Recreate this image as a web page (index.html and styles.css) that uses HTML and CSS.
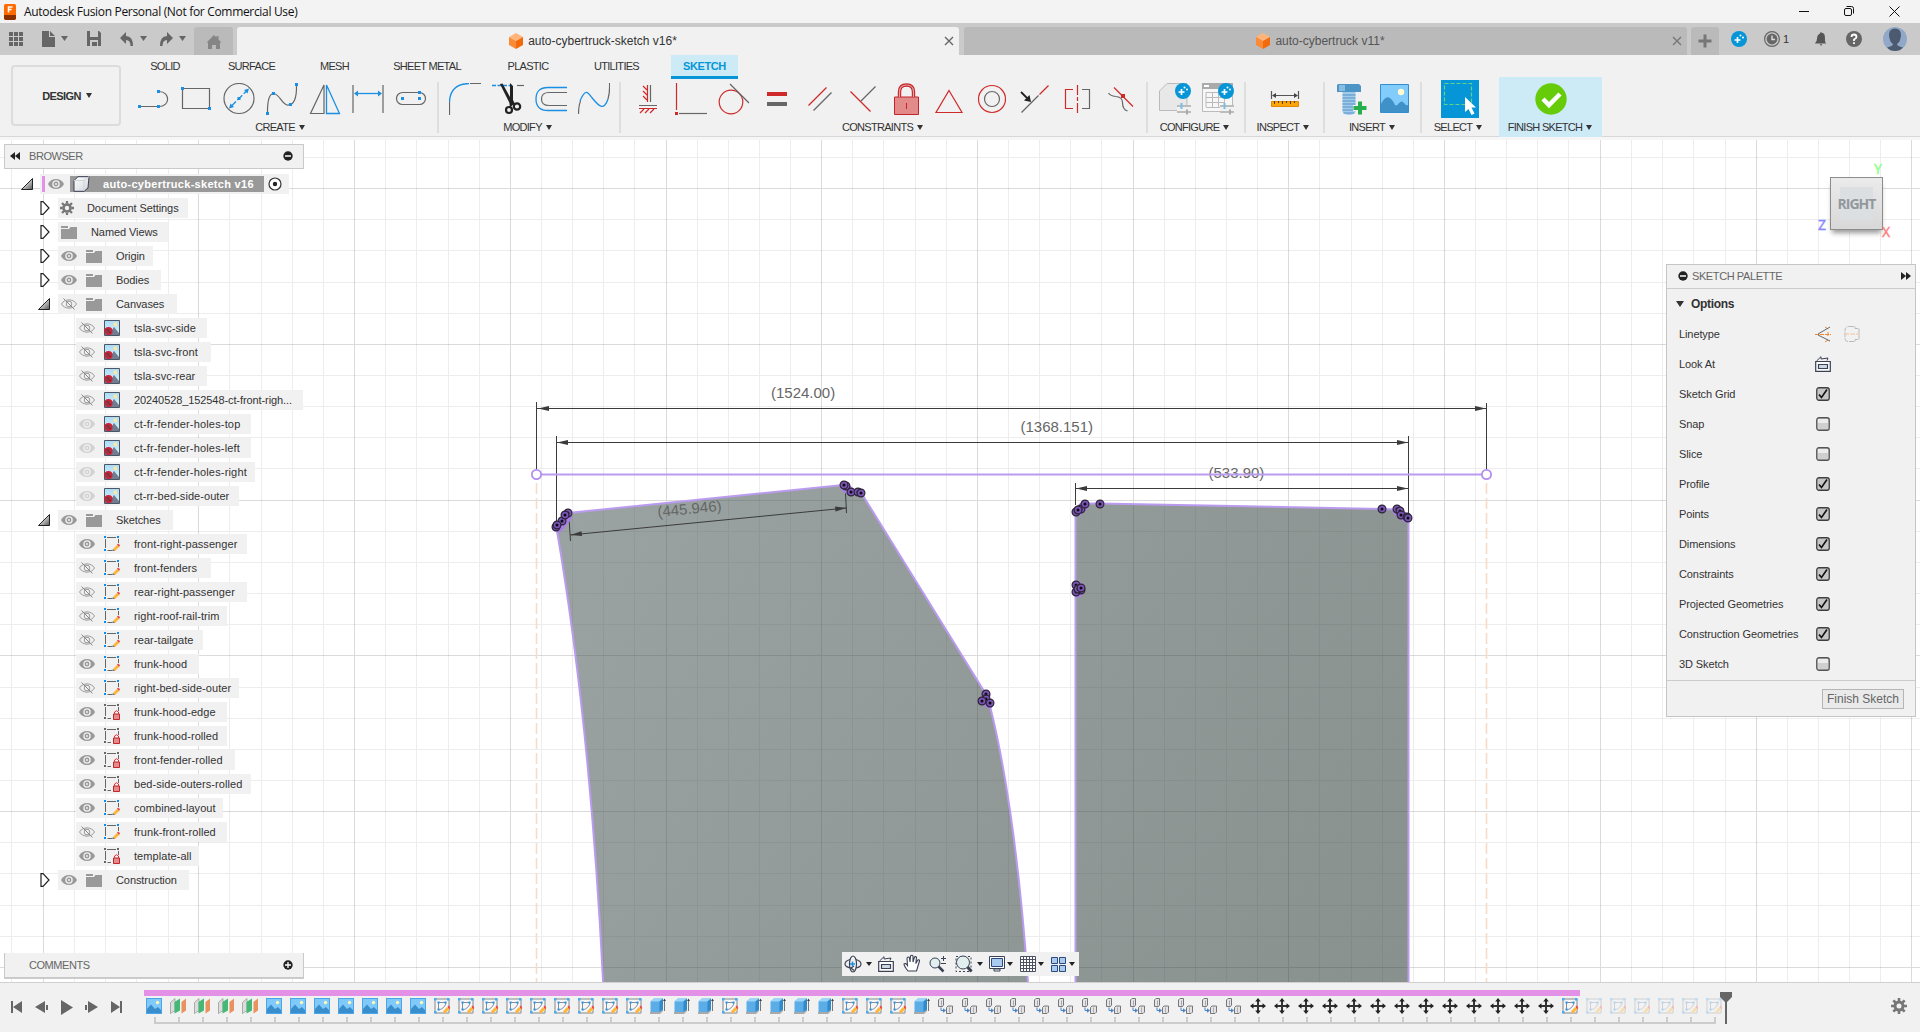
FILE: index.html
```html
<!DOCTYPE html>
<html lang="en">
<head>
<meta charset="utf-8">
<title>Autodesk Fusion Personal (Not for Commercial Use)</title>
<link rel="stylesheet" href="styles.css">
</head>
<body>
<svg class="defs" aria-hidden="true">
  <defs>
    <linearGradient id="g-face" x1="0" y1="0" x2="1" y2="1"><stop offset="0" stop-color="#fff"/><stop offset="1" stop-color="#d3d6dc"/></linearGradient>
    <linearGradient id="g-tri" x1="0" y1="0" x2="1" y2="1"><stop offset=".3" stop-color="#eee"/><stop offset="1" stop-color="#555"/></linearGradient>
    <linearGradient id="g-sky" x1="0" y1="0" x2="0" y2="1"><stop offset="0" stop-color="#a9dcf8"/><stop offset="1" stop-color="#dff0f8"/></linearGradient>
    <g id="node"><circle cx="5" cy="5" r="3.900" fill="#7a55b4" stroke="#2d2438" stroke-width="1.200"/><circle cx="5" cy="5" r="1.500" fill="#0c0814"/></g>
  </defs>
  <symbol id="eye" viewBox="0 0 16 12"><path d="M0 6C3-.8 13-.8 16 6 13 12.800 3 12.800 0 6z" fill="#999"/><circle cx="8" cy="6" r="3.100" fill="none" stroke="#f1f1f1" stroke-width="1.300"/><circle cx="8" cy="6" r="1" fill="#f1f1f1"/></symbol>
  <symbol id="eye-off" viewBox="0 0 16 12"><path d="M.5 6C3.500.5 12.500.5 15.500 6 12.500 11.500 3.500 11.500.5 6z" fill="none" stroke="#999"/><circle cx="8" cy="6" r="2.800" fill="none" stroke="#999"/><path d="M2.500.5l11 11" stroke="#888"/></symbol>
  <symbol id="folder" viewBox="0 0 16 14"><path d="M0 1h7v2H0zM0 4h8l1.500-2H16v12H0z" fill="#999"/></symbol>
  <symbol id="open" viewBox="0 0 12 12"><path d="M11.500.5v11H.5z" fill="url(#g-tri)" stroke="#222"/></symbol>
  <symbol id="shut" viewBox="0 0 10 14"><path d="M1 .7h2l6 6.300-6 6.300H1z" fill="#fff" stroke="#222" stroke-width="1.200"/></symbol>
  <symbol id="canvas-i" viewBox="0 0 16 16"><path d="M.5.5h15v15H.5z" fill="url(#g-sky)" stroke="#4b5566"/><path d="M1 12l4-4 3 2 2-3 5 6v2H1z" fill="#707c90"/><path d="M9.500 2.500h3.500V6H9.500z" fill="#fbe7a3"/><circle cx="4.500" cy="11" r="3.300" fill="#a53343" stroke="#d41f2c" stroke-width="1.400"/><path d="M2.500 9l4 4" stroke="#5d2434"/></symbol>
  <symbol id="sk" viewBox="0 0 16 16"><path d="M3 1.500h9M1.500 3v9M3.500 14.500H8M14.500 3v4" stroke="#666" fill="none"/><path d="M0 0h2v2H0zM13 0h2v2h-2zM0 13h2v2H0z" fill="#0b8ee8"/><path d="M9 13l4-4 2.300 2-4.300 4z" fill="#fdb73a"/><path d="M13 8.500l1.200-1L16 9.300 15 11z" fill="#f04040"/><path d="M8 15l1-2 2 2z" fill="#777"/></symbol>
  <symbol id="sk-lock" viewBox="0 0 16 16"><path d="M3 1.500h9M1.500 3v9M3.500 14.500H7M14.500 3v4" stroke="#666" fill="none"/><path d="M0 0h2v2H0zM13 0h2v2h-2zM0 13h2v2H0z" fill="#666"/><path d="M9.500 10h6v5.500h-6z" fill="#e38a8a" stroke="#c2242a"/><path d="M10.500 10V8q2-2.500 4 0v2" fill="none" stroke="#d33"/></symbol>
  <symbol id="pic" viewBox="0 0 16 16"><path d="M0 0h16v16H0z" fill="#4aa6e8"/><path d="M1 1h14v11H1z" fill="#80c9fb"/><path d="M1 11l4-4.500L9 11l3-2 3 3v3H1z" fill="#3a8ecb"/><circle cx="11.500" cy="4.500" r="1.700" fill="#fff6b8"/></symbol>
  <symbol id="plane" viewBox="0 0 16 16"><path d="M.5 4.500L5 .5v12l-4.500 3z" fill="#ddd" stroke="#aaa"/><path d="M4.500 4L10 .5v12L4.500 15.500z" fill="#45b877"/><path d="M11.500 4L16 .5v12l-4.500 3z" fill="#e8935f"/></symbol>
  <symbol id="tsk" viewBox="0 0 16 16"><path d="M1 1h14v14H1z" fill="#f6f6f6" stroke="#888"/><path d="M0 0h2.500v2.500H0zM13 0h2.500v2.500H13zM0 13h2.500v2.500H0z" fill="#4aaaf0"/><path d="M4 4.500h8q-1 6-7.500 7.500M4.500 5v6" fill="none" stroke="#7d8fa3"/><path d="M3.500 3.500h2v2h-2zM10.500 3.500h2v2h-2zM3.500 10.500h2v2h-2z" fill="#2c91e6"/><path d="M9 13.500L13 9l2.500 2-4.500 4.500z" fill="#fdb73a"/><path d="M13.500 8.500L15 7.500 16.500 10l-1.300 1.200z" fill="#f04040"/></symbol>
  <symbol id="box" viewBox="0 0 16 16"><path d="M0 14h9l4-3v2l-3 3H0z" fill="#aaa"/><path d="M.5 3.500L4 .5h9v11L9.500 14H.5z" fill="#5aade6"/><path d="M.5 3.500L4 .5h9L9.500 3.500z" fill="#9bd4f8"/><path d="M9.500 3.500L13 .5v11L9.500 14z" fill="#318bcb"/><path d="M14.500 2v11" stroke="#777"/><path d="M13 3l1.500-2.500L16 3z" fill="#444"/></symbol>
  <symbol id="comp" viewBox="0 0 16 16"><path d="M.5 2L2 .5h3.500V7L4.500 8.500h-4zM8.500 9.500L10 8h4.500v6l-1.500 1.500H8.500z" fill="#e4e4e6" stroke="#777"/><path d="M3.500 2.500v5M11.500 9.500v5" stroke="#aaa"/><path d="M3 9.500v3h2.500" fill="none" stroke="#4a82cc"/><path d="M5 10.200l3 2.300-3 2.300z" fill="#4a82cc"/></symbol>
  <symbol id="move" viewBox="0 0 16 16"><path d="M8 2v12M2 8h12" stroke="#333" stroke-width="2"/><path d="M5.200 3.500L8 0l2.800 3.500zM5.200 12.500L8 16l2.800-3.500zM3.500 5.200L0 8l3.500 2.800zM12.500 5.200L16 8l-3.500 2.800z" fill="#222"/></symbol>
  <symbol id="gear" viewBox="0 0 16 16"><circle cx="8" cy="8" r="4" fill="none" stroke="#777" stroke-width="3"/><path d="M8 0v3M8 13v3M0 8h3M13 8h3M2.300 2.300l2.200 2.200M11.500 11.500l2.200 2.200M2.300 13.700l2.200-2.200M11.500 4.500l2.200-2.200" stroke="#777" stroke-width="2.600"/></symbol>
  <symbol id="look" viewBox="0 0 16 16"><path d="M.7 5.500h14.600v9.800H.7z" fill="#fff" stroke="#3b4254" stroke-width="1.200"/><path d="M3.500 8.500h9v4h-9z" fill="#cdd8e4" stroke="#3b4254" stroke-width="1.200"/><path d="M1.500 5L6 .7V3l7-1-1 2.500" fill="none" stroke="#3b4254"/></symbol>
  <symbol id="spark" viewBox="0 0 16 16"><circle cx="8" cy="8" r="8" fill="#0696d7"/><path d="M6.500 6v6M3.500 9h6" stroke="#fff" stroke-width="1.700"/><circle cx="9.500" cy="4.500" r="1" fill="#fff"/><circle cx="12" cy="6.500" r="1" fill="#fff"/></symbol>
  <symbol id="cube-o" viewBox="0 0 14 16"><path d="M7 0l7 4-7 4-7-4z" fill="#ffb47a"/><path d="M0 4l7 4v8l-7-4z" fill="#fb8a36"/><path d="M14 4L7 8v8l7-4z" fill="#f26a0a"/></symbol>
  <symbol id="on" viewBox="0 0 14 14"><rect x=".75" y=".75" width="12.500" height="12.500" rx="2.200" fill="#c6c6c6" stroke="#3f3f3f" stroke-width="1.300"/><path d="M3 7.500L5.500 10.500 11 2.500" fill="none" stroke="#111" stroke-width="1.600"/></symbol>
  <symbol id="off" viewBox="0 0 14 14"><rect x=".75" y=".75" width="12.500" height="12.500" rx="2.200" fill="#cfcfcf" stroke="#555" stroke-width="1.300"/><path d="M2 2h10v4H2z" fill="#ececec"/></symbol>
  <symbol id="minus" viewBox="0 0 10 10"><circle cx="5" cy="5" r="4.700" fill="#222"/><path d="M2 5h6" stroke="#fff" stroke-width="1.500"/></symbol>
</svg>

<header class="titlebar">
  <svg class="app-icon" viewBox="0 0 12 16"><rect width="12" height="16" rx="1.500" fill="#ff6b00"/><path d="M0 11h12v3.500L10.500 16h-9L0 14.500z" fill="#8a3000"/><path d="M4.500 8.500V3h4M4.500 5.600h3.200" fill="none" stroke="#fff" stroke-width="1.500"/></svg>
  <span class="app-title">Autodesk Fusion Personal (Not for Commercial Use)</span>
  <svg class="win-buttons" viewBox="0 0 110 20"><path d="M8 9.500h10M98.500 4.500l10 10M108.500 4.500l-10 10" stroke="#111" fill="none"/><rect x="53.500" y="6.500" width="7" height="7" rx="1.500" fill="none" stroke="#111"/><path d="M55.500 4.500h5q2 0 2 2v5" fill="none" stroke="#111"/></svg>
</header>

<nav class="tabbar">
  <div class="quick">
    <svg viewBox="0 0 194 32"><g fill="#666"><path d="M9 9h4v4H9zM14 9h4v4h-4zM19 9h4v4h-4zM9 14h4v4H9zM14 14h4v4h-4zM19 14h4v4h-4zM9 19h4v4H9zM14 19h4v4h-4zM19 19h4v4h-4zM42 8h7v6h6v10H42zM50 8l5 5h-5zM61 13h7l-3.500 5zM140 13h7l-3.500 5zM179 13h7l-3.500 5z"/><path d="M87 8h12l2 2v13H87zM90 8v6h8V8zM90 17v6h2v-4h5v4h1v-6z" fill-rule="evenodd"/><path d="M120 15l6-6v4q7 0 7 10h-2.500q0-6-4.500-6v4zM173 15l-6-6v4q-7 0-7 10h2.500q0-6 4.500-6v4z"/></g></svg>
  </div>
  <div class="tab home"><svg viewBox="0 0 16 16"><path d="M8 1L.5 8.500H2V15h4v-4h4v4h4V8.500h1.500L12.500 5.500V2h-2v1.500z" fill="#858585"/></svg></div>
  <div class="tab doc active"><svg class="doc-icon"><use href="#cube-o"/></svg><span>auto-cybertruck-sketch v16*</span><svg class="tab-x" viewBox="0 0 10 10"><path d="M1 1l8 8M9 1L1 9" stroke="#666" stroke-width="1.400"/></svg></div>
  <div class="tab doc idle"><svg class="doc-icon"><use href="#cube-o"/></svg><span>auto-cybertruck v11*</span><svg class="tab-x" viewBox="0 0 10 10"><path d="M1 1l8 8M9 1L1 9" stroke="#777" stroke-width="1.400"/></svg></div>
  <div class="tab plus"><svg viewBox="0 0 14 14"><path d="M7 .5v13M.5 7h13" stroke="#777" stroke-width="3"/></svg></div>
  <div class="account">
    <svg class="spark"><use href="#spark"/></svg>
    <svg class="clock" viewBox="0 0 16 16"><circle cx="8" cy="8" r="7.400" fill="none" stroke="#666" stroke-width="1.200"/><circle cx="8" cy="8" r="5.400" fill="#666"/><path d="M8 4.500V8.500h3" stroke="#ddd" fill="none" stroke-width="1.400"/></svg><span class="jobs">1</span>
    <svg class="bell" viewBox="0 0 16 16"><path d="M1 13q2.500-2 2.500-6T8 1.500t4.500 5.500 2.500 6zM6.500 14h3l-1.500 2z" fill="#555"/><circle cx="8" cy="1.500" r="1.200" fill="#555"/></svg>
    <svg class="help" viewBox="0 0 16 16"><circle cx="8" cy="8" r="8" fill="#666"/><path d="M5.500 6q0-2.500 2.500-2.500T10.500 6Q10.500 7.300 8 8.500V10M8 11.300v1.700" stroke="#fff" stroke-width="1.800" fill="none"/></svg>
    <svg class="avatar" viewBox="0 0 24 24"><circle cx="12" cy="12" r="12" fill="#92a8c8"/><path d="M12 1.500q6 0 6 6.500-.5 7-4 9 0 2 6 3.500-3 3.500-8 3.500t-8-3.500Q10 19 10 17 6.500 15 6 8 6 1.500 12 1.500z" fill="#4c5a70"/></svg>
  </div>
</nav>

<section class="ribbon">
  <div class="workspace-pick"><span>DESIGN</span><i class="caret"></i></div>
  <div class="ribbon-main">
    <div class="modes"><span class="m-solid">SOLID</span><span class="m-surface">SURFACE</span><span class="m-mesh">MESH</span><span class="m-sheet">SHEET METAL</span><span class="m-plastic">PLASTIC</span><span class="m-util">UTILITIES</span><span class="m-sketch">SKETCH</span></div>
    <div class="groups">
      <div class="group create"><div class="tools">
        <svg viewBox="0 0 32 32"><path d="M3 23.500h18M22 8.500c11.500 0 11.500 15 0 15" class="gl"/><path class="bd" d="M1 22h3v3H1zM20 7h3v3h-3zM20 22h3v3h-3z"/></svg>
        <svg viewBox="0 0 32 32"><path d="M2.500 5.500h27v20h-27z" class="gl"/><path class="bd" d="M1 4h3v3H1zM28 24h3v3h-3z"/></svg>
        <svg viewBox="0 0 32 32"><circle cx="16" cy="15.500" r="15" class="gl"/><path d="M8 23.500l16-16" stroke="#1a8fe3" stroke-width="1.300" stroke-dasharray="7 2"/><path class="bd" d="M6 25.500l1.500-5 3.500 3.500zM26 5.500l-1.500 5L21 7zM14.500 14h3v3h-3z"/></svg>
        <svg viewBox="0 0 32 32"><path class="gl" d="M1.500 29Q1.500 10 8 10.500C14 12 15 20 21 22q10 1 9.500-20"/><path class="bd" d="M0 29h3v3H0zM6 9h3v3H6zM23 20h3v3h-3zM29 0h3v3h-3z"/></svg>
        <svg viewBox="0 0 32 32"><path class="gl" d="M15 2v28.500H1.500z"/><path class="bl" d="M17.500 2v28.500h13z"/></svg>
        <svg viewBox="0 0 32 32"><path class="gl" d="M1 2v28M31 2v28"/><path class="bl" d="M4 10.500h24"/><path class="bd" d="M2 10.500l4-3v6zM30 10.500l-4-3v6z"/></svg>
        <svg viewBox="0 0 32 32"><rect x="1.500" y="9.500" width="29" height="12" rx="6" class="gl"/><path class="bd" d="M6 14h3v3H6zM23 14h3v3h-3zM23 8h3v3h-3z"/></svg>
      </div><div class="label">CREATE<i class="caret"></i></div></div>
      <div class="group modify"><div class="tools">
        <svg viewBox="0 0 32 32"><path class="gl" d="M.5 32V19M21 .5h11"/><path class="bl" d="M.5 19Q1 1 20 .5"/></svg>
        <svg viewBox="0 0 32 32"><path class="bl" d="M0 2.500h20" stroke-dasharray="4 1.500"/><path class="gl" d="M25 2.500h7"/><path d="M8 1l2.500-.5L18 14V0l3 3v14l2 4-4 2zM17 17l5 3-4 5z" fill="#222"/><circle cx="17" cy="27" r="3" fill="none" stroke="#222" stroke-width="2.200"/><circle cx="25" cy="23.500" r="3.200" fill="none" stroke="#222" stroke-width="2.200"/></svg>
        <svg viewBox="0 0 32 32"><path class="bl" d="M32 4.500H13q-12 0-12 11.500T13 27.500h19" stroke-width="1.800"/><path class="gl" d="M32 9.500H14q-7.500 0-7.500 6.500t7.500 6.500h18"/></svg>
        <svg viewBox="0 0 32 32"><path class="gl" d="M.5 31q0-8 2-13M30 16q2-7 1.500-16"/><path class="bl" d="M2 18C8 4 10 10 15 16s11 13 15 0"/></svg>
      </div><div class="label">MODIFY<i class="caret"></i></div></div>
      <div class="group constraints"><div class="tools">
        <svg viewBox="0 0 32 32"><path class="rl" d="M15.500 2v17M11 3l4 4M11 8l4 4M11 13l4 4M7 25.500h18M8 30l4-4M13 30l4-4M18 30l4-4"/><path class="gl" d="M18.500 2v17M7 22.500h18"/></svg>
        <svg viewBox="0 0 32 32"><path class="rl" d="M1.500 0v27"/><path class="gl" d="M4 30.500h28"/><path class="rd" d="M0 29h3v3H0z"/></svg>
        <svg viewBox="0 0 32 32"><circle cx="13" cy="19" r="11.800" class="rl"/><path class="gl" d="M12 1l19 19"/></svg>
        <svg viewBox="0 0 32 32"><path class="rd" d="M6 9h20v4H6z"/><path d="M6 19h20v4H6z" fill="#666"/></svg>
        <svg viewBox="0 0 32 32"><path class="rl" d="M4.500 22.500l18-18"/><path class="gl" d="M9.500 27.500l18-18"/></svg>
        <svg viewBox="0 0 32 32"><path class="rl" d="M3.500 8.500l20 20"/><path class="gl" d="M14 18L28.500 3.500"/></svg>
        <svg viewBox="0 0 32 32"><path d="M4.500 14h24v17.500h-24z" fill="#e38a8a" stroke="#c2242a"/><path d="M9.500 14V9q0-7 7-7t7 7v5" fill="none" stroke="#c2242a" stroke-width="3.400"/><path d="M9.500 14V9q0-7 7-7t7 7v5" fill="none" stroke="#e9a0a0" stroke-width="1.200"/><path d="M16.500 20v6" stroke="#c2242a"/></svg>
        <svg viewBox="0 0 32 32"><path class="rl" d="M16 7.500l13 22H3z"/></svg>
        <svg viewBox="0 0 32 32"><circle cx="16" cy="16" r="13.500" class="rl"/><circle cx="16" cy="16" r="7.500" class="gl"/></svg>
        <svg viewBox="0 0 32 32"><path class="gl" d="M2.500 29.500l17-17"/><path class="rl" d="M20.500 11.500l9-9"/><path d="M2 9l6 6" stroke="#222" stroke-width="1.800"/><path d="M12 19l-7-1.500L10.500 12z" fill="#222"/></svg>
        <svg viewBox="0 0 32 32"><path class="rl" d="M11 6.500H3.500v19H11M15.500 2v10M15.500 14v4M15.500 20v10"/><path class="gl" d="M20 6.500h7.500v19H20"/></svg>
        <svg viewBox="0 0 32 32"><path class="gl" d="M3.500 10q2 3 7 3.500 7 .5 7 6 0 7 5 8.500"/><path class="rl" d="M9 4.500l19 19"/><path class="rd" d="M16 11h4v4h-4z"/></svg>
      </div><div class="label">CONSTRAINTS<i class="caret"></i></div></div>
      <div class="group configure"><div class="tools">
        <svg viewBox="0 0 32 32"><path d="M.5 27.500V8L8 .5h20v27z" fill="#e8e8e8" stroke="#bbb"/><path d="M18 22h14v9H18z" fill="#f1f1f1"/><path d="M18 23h14M18 29h14" stroke="#aaa" stroke-width="1.600"/><path d="M22.500 20v6" stroke="#7bbbe8" stroke-width="2"/><path d="M28 26.500v5" stroke="#aaa" stroke-width="2"/><use href="#spark" x="16" y="0" width="16" height="16"/></svg>
        <svg viewBox="0 0 32 32"><path d="M.5.5h30v28H.5z" fill="#f7f7f7" stroke="#bbb"/><path d="M0 0h31v6H0z" fill="#aaa"/><path d="M2 2h5v2H2z" fill="#fff"/><path d="M4 9.500h22M4 14.500h22M4 19.500h18M4 24.500h14M4 9v15M10.500 9v15M16.500 9v15M22.500 9v11" stroke="#bbb"/><path d="M18 22h14v9H18z" fill="#f1f1f1"/><path d="M18 23h14M18 29h14" stroke="#aaa" stroke-width="1.600"/><path d="M22.500 20v6" stroke="#7bbbe8" stroke-width="2"/><path d="M28 26.500v5" stroke="#aaa" stroke-width="2"/><use href="#spark" x="16" y="0" width="16" height="16"/></svg>
      </div><div class="label">CONFIGURE<i class="caret"></i></div></div>
      <div class="group inspect"><div class="tools">
        <svg viewBox="0 0 32 32"><path d="M2.500 8v8M29.500 8v8M5 12.500h22" stroke="#555" stroke-width="1.200"/><path d="M3 12.500l4-2.500v5zM29 12.500l-4-2.500v5z" fill="#444"/><path d="M2.500 18.500h27v5h-27z" fill="#fba40c" stroke="#e08a00"/><path d="M5.500 18v3M9.500 18v2M13.500 18v3M17.500 18v2M21.500 18v3M25.500 18v2" stroke="#5a3e00"/></svg>
      </div><div class="label">INSPECT<i class="caret"></i></div></div>
      <div class="group insert"><div class="tools">
        <svg viewBox="0 0 32 32"><path d="M2 1h21l2 2v6H1V2z" fill="#4d95c6"/><path d="M3 2h6v6H3z" fill="#88bde2"/><path d="M6.500 9h13v20q-2 3-6.500 3t-6.500-3z" fill="#a2cbeb"/><path d="M6.500 12h13M6.500 15h13M6.500 18h13M6.500 21h13M6.500 24h13M6.500 27h13M7.500 30h11" stroke="#5593c4" stroke-width="1.200"/><path d="M24 18v14M17 25h14" stroke="#f1f1f1" stroke-width="6"/><path d="M24 18.500v13M17.500 25h13" stroke="#27ae4d" stroke-width="4"/></svg>
        <svg viewBox="0 0 32 32"><path d="M1.500 1.500h28v28h-28z" fill="#82ccfb" stroke="#358fcf"/><path d="M2 21q7-14 14 1 2 1.500 4-2 3-3 5 0 2 3 4 2v7H2z" fill="#3f91c8"/><circle cx="22" cy="9" r="3.200" fill="#fffad0"/></svg>
      </div><div class="label">INSERT<i class="caret"></i></div></div>
      <div class="group select"><div class="tools">
        <svg class="big" viewBox="0 0 38 38"><path d="M0 0h38v38H0z" fill="#0696d7"/><path d="M3.500 3.500h27v21h-27z" fill="none" stroke="#63d388" stroke-width="1.200" stroke-dasharray="4 2"/><path d="M24 17v15l3.500-3 3 6 3-1.500-3-6H35z" fill="#fff"/></svg>
      </div><div class="label">SELECT<i class="caret"></i></div></div>
      <div class="group finish"><div class="tools">
        <svg viewBox="0 0 32 32"><circle cx="16" cy="16" r="15.700" fill="#66cc0a"/><path d="M8 16l6 6 11-11" fill="none" stroke="#fff" stroke-width="4.500"/></svg>
      </div><div class="label">FINISH SKETCH<i class="caret"></i></div></div>
    </div>
  </div>
</section>

<main class="stage">
  <svg class="drawing" viewBox="0 140 1920 842">
    <defs>
      <linearGradient id="g-panel" gradientUnits="userSpaceOnUse" x1="560" y1="480" x2="1400" y2="980"><stop offset="0" stop-color="#475856"/><stop offset=".45" stop-color="#394945"/><stop offset="1" stop-color="#283733"/></linearGradient>
    </defs>
    <path class="grid minor" d="M11.500 140V982M74.500 140V982M105.500 140V982M136.500 140V982M168.500 140V982M229.500 140V982M261.500 140V982M292.500 140V982M323.500 140V982M385.500 140V982M416.500 140V982M448.500 140V982M479.500 140V982M541.500 140V982M572.500 140V982M603.500 140V982M634.500 140V982M697.500 140V982M728.500 140V982M759.500 140V982M790.500 140V982M852.500 140V982M883.500 140V982M915.500 140V982M946.500 140V982M1008.500 140V982M1039.500 140V982M1070.500 140V982M1101.500 140V982M1164.500 140V982M1195.500 140V982M1226.500 140V982M1257.500 140V982M1319.500 140V982M1351.500 140V982M1382.500 140V982M1413.500 140V982M1475.500 140V982M1506.500 140V982M1537.500 140V982M1568.500 140V982M1631.500 140V982M1662.500 140V982M1693.500 140V982M1725.500 140V982M1787.500 140V982M1818.500 140V982M1849.500 140V982M1880.500 140V982M0 157.500H1920M0 219.500H1920M0 250.500H1920M0 282.500H1920M0 313.500H1920M0 375.500H1920M0 406.500H1920M0 437.500H1920M0 468.500H1920M0 531.500H1920M0 562.500H1920M0 593.500H1920M0 624.500H1920M0 687.500H1920M0 718.500H1920M0 749.500H1920M0 780.500H1920M0 842.500H1920M0 873.500H1920M0 905.500H1920M0 936.500H1920"/>
    <path class="grid major" d="M43.500 140V982M198.500 140V982M354.500 140V982M510.500 140V982M666.500 140V982M821.500 140V982M977.500 140V982M1133.500 140V982M1288.500 140V982M1444.500 140V982M1600.500 140V982M1756.500 140V982M1911.500 140V982M0 188.500H1920M0 344.500H1920M0 500.500H1920M0 655.500H1920M0 811.500H1920M0 967.500H1920"/>
    <g fill="url(#g-panel)" fill-opacity=".55" stroke="#bb9bf0" stroke-width="2">
      <path d="M603.500 990Q590.600 725 556.500 528L568 513 843 485 861 492.500 987 696 990 706Q1016 810 1028.500 990"/>
      <path d="M1075.500 990V512L1084 503.500H1100L1382 509 1397 509.500 1408.500 518V990"/>
    </g>
    <path d="M536.500 483V982M1486.500 483V982" stroke="#f6dcc8" stroke-width="1.600" stroke-dasharray="11 4"/>
    <g class="dims" fill="#666">
      <text x="771" y="398">(1524.00)</text><text x="1020.500" y="432">(1368.151)</text><text x="1208.500" y="478">(533.90)</text><text transform="translate(658 517) rotate(-5.600)">(445.946)</text>
    </g>
    <g stroke="#3b3b3b" fill="none"><path d="M536.500 402V469M1486.500 403V469M537 408.500H1486M556.500 436V524M1408.500 436V518M557 442.500H1408M1075.500 483V505M1076 488.500H1408M570 535L846.500 508M569 518l1.500 23M845.500 493l1 20"/></g>
    <path fill="#3b3b3b" d="M538 408.500l11-2.500v5zM1486 408.500l-11-2.500v5zM557 442.500l11-2.500v5zM1408 442.500l-11-2.500v5zM1076 488.500l11-2.500v5zM1408 488.500l-11-2.500v5zM570 535l11.500-3.800.6 4.800zM846.500 508l-11.500-1.500.5 5z"/>
    <path d="M536.500 474.500H1486.500" stroke="#bb9bf0" stroke-width="1.800"/>
    <g fill="#fff" stroke="#b48df0" stroke-width="1.800"><circle cx="536.500" cy="474.500" r="4.600"/><circle cx="1486.500" cy="474.500" r="4.600"/></g>
    <g stroke="#a97fe6" stroke-width="9" stroke-linecap="round"><path d="M558.500 528l9-11M844.500 487l4 3M986 695l-1 6 4 3M1077 512l8-7M1397 511l9 7M1078 586v7"/></g>
    <g>
      <use href="#node" x="551" y="522"/><use href="#node" x="557" y="516"/><use href="#node" x="552" y="520"/><use href="#node" x="563" y="508"/><use href="#node" x="560" y="510"/>
      <use href="#node" x="841" y="481"/><use href="#node" x="839" y="480"/><use href="#node" x="846" y="487"/><use href="#node" x="853" y="487"/><use href="#node" x="856" y="488"/>
      <use href="#node" x="981" y="689"/><use href="#node" x="981" y="694"/><use href="#node" x="977" y="696"/><use href="#node" x="985" y="698"/>
      <use href="#node" x="1071" y="507"/><use href="#node" x="1076" y="504"/><use href="#node" x="1073" y="505"/><use href="#node" x="1080" y="499"/><use href="#node" x="1095" y="499"/>
      <use href="#node" x="1377" y="504"/><use href="#node" x="1392" y="504"/><use href="#node" x="1395" y="506"/><use href="#node" x="1396" y="510"/><use href="#node" x="1402" y="512"/><use href="#node" x="1403" y="513"/>
      <use href="#node" x="1071" y="580"/><use href="#node" x="1071" y="587"/><use href="#node" x="1076" y="585"/><use href="#node" x="1073" y="584"/><use href="#node" x="1076" y="583"/>
    </g>
  </svg>

  <div class="viewcube"><span class="axis y">Y</span><span class="axis z">Z</span><div class="face">RIGHT</div><span class="axis x">X</span></div>

  <aside class="dock">
    <div class="panel-head"><svg class="chev" viewBox="0 0 10 8"><path d="M5 0v8L0 4zM10 0v8L5 4z" fill="#222"/></svg><span>BROWSER</span><svg class="dot"><use href="#minus"/></svg></div>
    <ul class="tree">
      <li class="root"><svg class="open"><use href="#open"/></svg><div class="row" style="width:249px"><i class="mark"></i><svg class="eye"><use href="#eye"/></svg><div class="picked"><svg viewBox="0 0 17 16"><path d="M1 4.500L5 .7h11L15 12l-4 3.300H1z" fill="url(#g-face)" stroke="#3b4254"/><path d="M1 4.500h10V15M11 4.500L16 .7" fill="none" stroke="#cfd3da"/></svg><span>auto-cybertruck-sketch v16</span></div><svg class="radio" viewBox="0 0 14 14"><circle cx="7" cy="7" r="6" fill="#fff" stroke="#333" stroke-width="1.200"/><circle cx="7" cy="7" r="2.200" fill="#222"/></svg></div></li>
      <li class="l1"><svg class="shut"><use href="#shut"/></svg><div class="row" style="width:130px"><svg class="gear"><use href="#gear"/></svg><span class="after-gear">Document Settings</span></div></li>
      <li class="l1"><svg class="shut"><use href="#shut"/></svg><div class="row" style="width:110px"><svg class="folder"><use href="#folder"/></svg><span>Named Views</span></div></li>
      <li class="l1"><svg class="shut"><use href="#shut"/></svg><div class="row" style="width:95px"><svg class="eye"><use href="#eye"/></svg><svg class="folder"><use href="#folder"/></svg><span>Origin</span></div></li>
      <li class="l1"><svg class="shut"><use href="#shut"/></svg><div class="row" style="width:103px"><svg class="eye"><use href="#eye"/></svg><svg class="folder"><use href="#folder"/></svg><span>Bodies</span></div></li>
      <li class="l1"><svg class="open"><use href="#open"/></svg><div class="row" style="width:119px"><svg class="eye"><use href="#eye-off"/></svg><svg class="folder"><use href="#folder"/></svg><span>Canvases</span></div></li>
      <li class="l2"><div class="row" style="width:131px"><svg class="eye"><use href="#eye-off"/></svg><svg class="kind"><use href="#canvas-i"/></svg><span>tsla-svc-side</span></div></li>
      <li class="l2"><div class="row" style="width:135px"><svg class="eye"><use href="#eye-off"/></svg><svg class="kind"><use href="#canvas-i"/></svg><span>tsla-svc-front</span></div></li>
      <li class="l2"><div class="row" style="width:131px"><svg class="eye"><use href="#eye-off"/></svg><svg class="kind"><use href="#canvas-i"/></svg><span>tsla-svc-rear</span></div></li>
      <li class="l2 cut"><div class="row" style="width:227px"><svg class="eye"><use href="#eye-off"/></svg><svg class="kind"><use href="#canvas-i"/></svg><span>20240528_152548-ct-front-righ...</span></div></li>
      <li class="l2 wide"><div class="row" style="width:175px"><svg class="eye faint"><use href="#eye"/></svg><svg class="kind"><use href="#canvas-i"/></svg><span>ct-fr-fender-holes-top</span></div></li>
      <li class="l2 wide"><div class="row" style="width:175px"><svg class="eye faint"><use href="#eye"/></svg><svg class="kind"><use href="#canvas-i"/></svg><span>ct-fr-fender-holes-left</span></div></li>
      <li class="l2 wide"><div class="row" style="width:179px"><svg class="eye faint"><use href="#eye"/></svg><svg class="kind"><use href="#canvas-i"/></svg><span>ct-fr-fender-holes-right</span></div></li>
      <li class="l2"><div class="row" style="width:163px"><svg class="eye faint"><use href="#eye"/></svg><svg class="kind"><use href="#canvas-i"/></svg><span>ct-rr-bed-side-outer</span></div></li>
      <li class="l1"><svg class="open"><use href="#open"/></svg><div class="row" style="width:115px"><svg class="eye"><use href="#eye"/></svg><svg class="folder"><use href="#folder"/></svg><span>Sketches</span></div></li>
      <li class="l2"><div class="row" style="width:171px"><svg class="eye"><use href="#eye"/></svg><svg class="kind"><use href="#sk"/></svg><span>front-right-passenger</span></div></li>
      <li class="l2"><div class="row" style="width:135px"><svg class="eye"><use href="#eye-off"/></svg><svg class="kind"><use href="#sk"/></svg><span>front-fenders</span></div></li>
      <li class="l2"><div class="row" style="width:171px"><svg class="eye"><use href="#eye-off"/></svg><svg class="kind"><use href="#sk"/></svg><span>rear-right-passenger</span></div></li>
      <li class="l2"><div class="row" style="width:151px"><svg class="eye"><use href="#eye-off"/></svg><svg class="kind"><use href="#sk"/></svg><span>right-roof-rail-trim</span></div></li>
      <li class="l2"><div class="row" style="width:127px"><svg class="eye"><use href="#eye-off"/></svg><svg class="kind"><use href="#sk"/></svg><span>rear-tailgate</span></div></li>
      <li class="l2"><div class="row" style="width:123px"><svg class="eye"><use href="#eye"/></svg><svg class="kind"><use href="#sk"/></svg><span>frunk-hood</span></div></li>
      <li class="l2"><div class="row" style="width:163px"><svg class="eye"><use href="#eye-off"/></svg><svg class="kind"><use href="#sk"/></svg><span>right-bed-side-outer</span></div></li>
      <li class="l2"><div class="row" style="width:151px"><svg class="eye"><use href="#eye"/></svg><svg class="kind"><use href="#sk-lock"/></svg><span>frunk-hood-edge</span></div></li>
      <li class="l2"><div class="row" style="width:151px"><svg class="eye"><use href="#eye"/></svg><svg class="kind"><use href="#sk-lock"/></svg><span>frunk-hood-rolled</span></div></li>
      <li class="l2"><div class="row" style="width:159px"><svg class="eye"><use href="#eye"/></svg><svg class="kind"><use href="#sk-lock"/></svg><span>front-fender-rolled</span></div></li>
      <li class="l2"><div class="row" style="width:175px"><svg class="eye"><use href="#eye"/></svg><svg class="kind"><use href="#sk-lock"/></svg><span>bed-side-outers-rolled</span></div></li>
      <li class="l2"><div class="row" style="width:147px"><svg class="eye"><use href="#eye"/></svg><svg class="kind"><use href="#sk"/></svg><span>combined-layout</span></div></li>
      <li class="l2"><div class="row" style="width:151px"><svg class="eye"><use href="#eye-off"/></svg><svg class="kind"><use href="#sk"/></svg><span>frunk-front-rolled</span></div></li>
      <li class="l2"><div class="row" style="width:123px"><svg class="eye"><use href="#eye"/></svg><svg class="kind"><use href="#sk-lock"/></svg><span>template-all</span></div></li>
      <li class="l1"><svg class="shut"><use href="#shut"/></svg><div class="row" style="width:131px"><svg class="eye"><use href="#eye"/></svg><svg class="folder"><use href="#folder"/></svg><span>Construction</span></div></li>
    </ul>
  </aside>

  <div class="comments"><span>COMMENTS</span><svg class="dot" viewBox="0 0 10 10"><circle cx="5" cy="5" r="4.700" fill="#222"/><path d="M2 5h6M5 2v6" stroke="#fff" stroke-width="1.300"/></svg></div>

  <aside class="palette">
    <div class="palette-head"><svg class="dot"><use href="#minus"/></svg><span>SKETCH PALETTE</span><svg class="chev" viewBox="0 0 10 8"><path d="M0 0v8l5-4zM5 0v8l5-4z" fill="#222"/></svg></div>
    <div class="options"><i class="caret"></i>Options</div>
    <dl>
      <div><dt>Linetype</dt><dd><svg class="i16" viewBox="0 0 16 16"><path d="M0 8.500h16M13 6v5M10 1l3 2M10 16l3-2" stroke="#f0862e" stroke-dasharray="4 1"/><path d="M15 1L3 8M15 15L3 9" stroke="#666" fill="none"/></svg><svg class="i16 second" viewBox="0 0 16 16"><path d="M5 .5h6v2h4v11h-4v2H4q-3 0-3-3V4Q1 .5 5 .5z" fill="none" stroke="#bbb" stroke-dasharray="5 1"/><path d="M0 8h16" stroke="#f3c3a0" stroke-dasharray="5 1"/></svg></dd></div>
      <div><dt>Look At</dt><dd><svg class="i16"><use href="#look"/></svg></dd></div>
      <div><dt>Sketch Grid</dt><dd><svg class="check"><use href="#on"/></svg></dd></div>
      <div><dt>Snap</dt><dd><svg class="check"><use href="#off"/></svg></dd></div>
      <div><dt>Slice</dt><dd><svg class="check"><use href="#off"/></svg></dd></div>
      <div><dt>Profile</dt><dd><svg class="check"><use href="#on"/></svg></dd></div>
      <div><dt>Points</dt><dd><svg class="check"><use href="#on"/></svg></dd></div>
      <div><dt>Dimensions</dt><dd><svg class="check"><use href="#on"/></svg></dd></div>
      <div><dt>Constraints</dt><dd><svg class="check"><use href="#on"/></svg></dd></div>
      <div><dt>Projected Geometries</dt><dd><svg class="check"><use href="#on"/></svg></dd></div>
      <div><dt>Construction Geometries</dt><dd><svg class="check"><use href="#on"/></svg></dd></div>
      <div><dt>3D Sketch</dt><dd><svg class="check"><use href="#off"/></svg></dd></div>
    </dl>
    <div class="palette-foot"><button>Finish Sketch</button></div>
  </aside>

  <div class="navbar">
    <svg viewBox="0 0 237 24"><g fill="none" stroke="#3b4254" stroke-width="1.200"><ellipse cx="11" cy="12" rx="3.500" ry="8"/><path d="M8 7.500q-5 1.500-5 4.500t6 4M14 7.500q5 1.500 5 4.500t-5 4M12 14l-3 2 3 2.500"/></g><path d="M8 12h5M10.500 9.500v5" stroke="#1a8fe3" stroke-width="1.500"/>
    <use href="#look" x="36" y="4" width="16" height="16"/>
    <path d="M66 19q-4-5-4-7 1.500-1.500 3.500 1.500L65 6q1.500-2 2.500 0l.5 4 .5-6q1.500-1.500 2.500 0v6l1.500-5q1.500-1 2 .5l-.7 6 2-3.500q2-.5 1.700 1L74.500 19z" fill="#fff" stroke="#3b4254" stroke-width="1.100"/>
    <circle cx="93" cy="11" r="5" fill="#e1f0ee" stroke="#3b4254"/><path d="M96.500 14.500l5 5" stroke="#3b4254" stroke-width="2.500"/><path d="M99 6.500h5M101.500 4v5M99 11.500h5" stroke="#3b4254"/>
    <path d="M114 4.500h15v15h-15z" fill="none" stroke="#3b4254" stroke-dasharray="2 2"/><circle cx="121" cy="10.500" r="6.500" fill="#e1f0ee" stroke="#3b4254"/><path d="M125.500 15l4 4.500" stroke="#3b4254" stroke-width="3"/>
    <path d="M147.500 4.500h15v12h-15z" fill="#fff" stroke="#3b4254"/><path d="M149.500 6.500h11v8h-11z" fill="#a9cbf0" stroke="#2d4a7c"/><path d="M152 17h6v2h-6z" fill="#fff" stroke="#3b4254"/>
    <path d="M178.500 4.500h15v15h-15zM178.500 7.500h15M178.500 10.500h15M178.500 13.500h15M178.500 16.500h15M181.500 4v15M184.500 4v15M187.500 4v15M190.500 4v15" fill="#fff" stroke="#4b5160"/>
    <path d="M209.500 5.500h6v6h-6zM217.500 5.500h6v6h-6zM209.500 13.500h6v6h-6zM217.500 13.500h6v6h-6z" fill="#a9cbf0" stroke="#2d4a7c"/>
    <path d="M24 10h6l-3 4zM135 10h6l-3 4zM165 10h6l-3 4zM196 10h6l-3 4zM227 10h6l-3 4z" fill="#222"/></svg>
  </div>
</main>

<footer class="timeline">
  <div class="playback">
    <svg viewBox="0 0 144 24"><path fill="#666" d="M11 6h2v12h-2zM22 6v12l-9-6zM45 6v12l-10-6zM46 10h2v5h-2zM61 5l12 7.500L61 20zM85 10h2v5h-2zM88 6v12l10-6zM111 6v12l9-6zM120 6h2v12h-2z"/></svg>
  </div>
  <div class="track">
    <div class="range"></div>
    <div class="steps">
      <svg><use href="#pic"/></svg><svg><use href="#plane"/></svg><svg><use href="#plane"/></svg><svg><use href="#plane"/></svg><svg><use href="#plane"/></svg>
      <svg><use href="#pic"/></svg><svg><use href="#pic"/></svg><svg><use href="#pic"/></svg><svg><use href="#pic"/></svg><svg><use href="#pic"/></svg><svg><use href="#pic"/></svg><svg><use href="#pic"/></svg>
      <svg><use href="#tsk"/></svg><svg><use href="#tsk"/></svg><svg><use href="#tsk"/></svg><svg><use href="#tsk"/></svg><svg><use href="#tsk"/></svg><svg><use href="#tsk"/></svg><svg><use href="#tsk"/></svg><svg><use href="#tsk"/></svg><svg><use href="#tsk"/></svg>
      <svg><use href="#box"/></svg><svg><use href="#box"/></svg><svg><use href="#box"/></svg><svg><use href="#tsk"/></svg><svg><use href="#box"/></svg><svg><use href="#box"/></svg><svg><use href="#box"/></svg><svg><use href="#box"/></svg>
      <svg><use href="#tsk"/></svg><svg><use href="#tsk"/></svg><svg><use href="#tsk"/></svg><svg><use href="#box"/></svg>
      <svg><use href="#comp"/></svg><svg><use href="#comp"/></svg><svg><use href="#comp"/></svg><svg><use href="#comp"/></svg><svg><use href="#comp"/></svg><svg><use href="#comp"/></svg><svg><use href="#comp"/></svg><svg><use href="#comp"/></svg><svg><use href="#comp"/></svg><svg><use href="#comp"/></svg><svg><use href="#comp"/></svg><svg><use href="#comp"/></svg><svg><use href="#comp"/></svg>
      <svg><use href="#move"/></svg><svg><use href="#move"/></svg><svg><use href="#move"/></svg><svg><use href="#move"/></svg><svg><use href="#move"/></svg><svg><use href="#move"/></svg><svg><use href="#move"/></svg><svg><use href="#move"/></svg><svg><use href="#move"/></svg><svg><use href="#move"/></svg><svg><use href="#move"/></svg><svg><use href="#move"/></svg><svg><use href="#move"/></svg>
      <svg><use href="#tsk"/></svg><svg class="later"><use href="#tsk"/></svg><svg class="later"><use href="#tsk"/></svg><svg class="later"><use href="#tsk"/></svg><svg class="later"><use href="#tsk"/></svg><svg class="later"><use href="#tsk"/></svg><svg class="later"><use href="#tsk"/></svg>
    </div>
    <div class="ticks"></div>
    <svg class="playhead" viewBox="0 0 12 32"><path d="M0 0h12v5L7 10v22H5V10L0 5z" fill="#666"/></svg>
  </div>
  <svg class="settings"><use href="#gear"/></svg>
</footer>
</body>
</html>
```
FILE: styles.css
```css
* { box-sizing: border-box; }
body {
  margin: 0;
  width: 1920px;
  height: 1032px;
  overflow: hidden;
  display: flex;
  flex-direction: column;
  font: 11px/14px "Liberation Sans", Arial, sans-serif;
  color: #333;
  background: #f1f1f1;
}
svg { display: block; flex: none; }
.defs { position: absolute; width: 0; height: 0; }
.caret {
  display: inline-block;
  flex: none;
  width: 0;
  height: 0;
  border: 3px solid transparent;
  border-top: 5px solid #333;
  border-bottom: 0;
}

.titlebar { flex: none; height: 23px; display: flex; align-items: center; background: #f3f3f3; }
.app-icon { width: 14px; height: 16px; margin: 0 7px 0 3px; }
.app-title { flex: 1; font: 12px/20px "Open Sans", "Noto Sans", sans-serif; letter-spacing: -0.32px; color: #111; }
.win-buttons { width: 110px; height: 20px; margin-right: 19px; }

.tabbar { flex: none; height: 32px; display: flex; align-items: flex-end; background: #cacaca; }
.quick { width: 194px; height: 32px; }
.quick svg { width: 194px; height: 32px; }
.tab { height: 28px; display: flex; align-items: center; justify-content: center; border-radius: 3px 3px 0 0; background: #bababa; }
.home { width: 39px; margin-right: 4px; padding-top: 2px; }
.home svg { width: 16px; height: 16px; }
.doc { font-size: 12px; color: #555; position: relative; }
.doc .doc-icon { width: 14px; height: 16px; margin-right: 5px; }
.doc .tab-x { position: absolute; right: 5px; top: 9px; width: 10px; height: 10px; }
.active { width: 722px; margin-right: 5px; padding-right: 10px; background: #f1f1f1; color: #333; }
.idle { width: 723px; margin-right: 4px; padding-right: 10px; }
.plus { width: 28px; }
.plus svg { width: 14px; height: 14px; }
.account { flex: 1; height: 32px; display: flex; align-items: center; padding-left: 12px; }
.spark, .clock, .bell, .help { width: 16px; height: 16px; }
.clock { margin-left: 17px; }
.jobs { width: 8px; margin: 0 18px 0 3px; }
.bell { width: 14px; margin-left: 5px; }
.help { margin-left: 18px; }
.avatar { width: 24px; height: 24px; margin-left: 21px; }

.ribbon { flex: none; height: 85px; display: flex; position: relative; border-bottom: 3px solid #f6f6f6; box-shadow: inset 0 -1px #d8d8d8; }
.workspace-pick { flex: none; width: 110px; height: 61px; margin: 10px 0 0 11px; display: flex; align-items: center; justify-content: center; gap: 5px; border: 2px solid #dcdcdc; border-radius: 4px; font-weight: bold; letter-spacing: -0.6px; padding-left: 2px; }
.ribbon-main { display: flex; flex-direction: column; padding-left: 6px; }
.modes, .label { letter-spacing: -0.7px; white-space: nowrap; }
.modes { flex: none; height: 24px; display: flex; line-height: 22px; text-align: center; }
.modes span { flex: none; }
.m-solid { width: 76px; }
.m-surface { width: 97px; }
.m-mesh { width: 69px; }
.m-sheet { width: 116px; }
.m-plastic { width: 86px; }
.m-util { width: 100px; padding-right: 9px; }
.m-sketch { width: 67px; color: #0696d7; font-weight: bold; background: #cdeaf7; border-bottom: 3px solid #0696d7; letter-spacing: -0.4px; }
.groups { display: flex; height: 58px; }
.group { display: flex; flex-direction: column; align-items: center; position: relative; }
.group::after { content: ""; width: 2px; height: 51px; background: #dedede; position: absolute; right: -1px; top: 3px; }
.tools { display: flex; align-items: center; height: 40px; }
.tools svg { width: 32px; height: 32px; margin: 0 5.500px; }
.tools svg.big { width: 38px; height: 38px; margin: 0; }
.label { display: flex; align-items: center; gap: 4px; height: 16px; padding-right: 3px; }
.create { width: 311px; padding-right: 2px; }
.modify { width: 182px; }
.constraints { width: 527px; padding-left: 1px; }
.configure { width: 98px; }
.inspect { width: 79px; }
.insert { width: 97px; padding-left: 2px; }
.select { width: 78px; padding-right: 1px; }
.finish { width: 103px; height: 60px; margin-top: -2px; padding-top: 2px; background: #cdeaf7; }
.finish .label { padding-right: 1px; }
.select::after, .finish::after { display: none; }
.gl { fill: none; stroke: #666; stroke-width: 1.200; }
.bl { fill: none; stroke: #1a8fe3; stroke-width: 1.300; }
.rl { fill: none; stroke: #cf2a2a; stroke-width: 1.200; }
.bd { fill: #1a8fe3; }
.rd { fill: #cf2a2a; }

.stage { flex: none; height: 842px; position: relative; overflow: hidden; background: #fff; }
.drawing { width: 1920px; height: 842px; }
.grid { shape-rendering: crispEdges; fill: none; stroke: #000; }
.minor { stroke-opacity: .07; }
.major { stroke-opacity: .14; }
.dims text { font: 15px "Liberation Sans", Arial, sans-serif; }

.viewcube { position: absolute; left: 1815px; top: 20px; width: 85px; height: 84px; font: bold 14px "Open Sans", "Noto Sans", sans-serif; }
.face { position: absolute; left: 15px; top: 17px; width: 53px; height: 53px; border: 1px solid #8c8c8c; display: flex; align-items: center; justify-content: center; font-size: 14px; letter-spacing: -1px; color: #93979c; background: linear-gradient(#dcdfe2, #dcdfe2) center / 33px 33px no-repeat, linear-gradient(#ebebeb, #d8d8d8); box-shadow: 0 5px 5px -2px #999; }
.axis { position: absolute; font: 14px/16px "Noto Sans", sans-serif; -webkit-text-stroke: .4px; }
.axis.y { left: 59px; top: 1px; color: #8dff8d; }
.axis.z { left: 3px; top: 57px; color: #8888ff; }
.axis.x { left: 67px; top: 64px; color: #ff8080; }

.dock { position: absolute; left: 4px; top: 4px; width: 300px; }
.panel-head, .comments { display: flex; align-items: center; width: 300px; background: #f1f1f1; border: 1px solid #c9c9c9; color: #666; letter-spacing: -0.45px; }
.panel-head { height: 25px; padding: 0 10px 2px 5px; }
.panel-head span { flex: 1; margin-left: 9px; }
.chev { width: 10px; height: 8px; }
.dot { width: 10px; height: 10px; }
.comments { position: absolute; left: 4px; top: 813px; height: 25px; padding: 0 10px 0 24px; border-top: 0; box-shadow: 0 1px #ccc; }
.comments span { flex: 1; }
.tree { margin: 3px 0 0; padding: 0; list-style: none; }
.tree li { height: 24px; display: flex; align-items: center; white-space: nowrap; letter-spacing: -0.080px; }
.row { height: 20px; display: flex; align-items: center; background: #f1f1f1; overflow: hidden; }
.root { padding-left: 17px; }
.root .open { margin-right: 7px; }
.l1 { padding-left: 35px; }
.tree .l2 { padding-left: 72px; letter-spacing: .06px; }
.tree .cut { letter-spacing: -0.090px; }
.tree .wide { letter-spacing: .17px; }
.open { width: 12px; height: 12px; margin-right: 7px; }
.l1 .open { margin: 0 8px 0 -1px; }
.shut { width: 10px; height: 14px; margin: 0 8px 0 1px; }
.eye { width: 16px; height: 12px; margin: 0 0 0 3px; }
.faint { opacity: .35; }
.mark { width: 3px; height: 16px; margin-left: 2px; background: #e391e6; }
.picked { display: flex; align-items: center; width: 194px; height: 16px; margin-left: 6px; padding-left: 3px; background: #999; color: #fff; font-weight: bold; letter-spacing: .3px; }
.picked svg { width: 17px; height: 16px; margin-right: 13px; }
.radio { width: 14px; height: 14px; margin-left: 4px; }
.gear { width: 14px; height: 14px; margin-left: 2px; }
.row .after-gear { margin-left: 13px; }
.folder { width: 16px; height: 14px; margin: 0 0 0 3px; }
.eye + .folder { margin-left: 9px; }
.kind { width: 16px; height: 16px; margin-left: 9px; }
.row > span { margin-left: 14px; }

.palette { position: absolute; left: 1666px; top: 124px; width: 250px; height: 453px; background: #f1f1f1; border: 1px solid #c5c5c5; }
.palette-head { display: flex; align-items: center; height: 24px; padding: 0 4px 2px 11px; border-bottom: 1px solid #ccc; color: #666; letter-spacing: -0.4px; }
.palette-head span { flex: 1; margin-left: 4px; }
.options { display: flex; align-items: center; gap: 7px; height: 30px; padding-left: 9px; font-weight: bold; font-size: 12px; letter-spacing: -0.3px; }
.options .caret { border-width: 6px 4px 0; }
.palette dl { margin: 0; padding-bottom: 1px; }
.palette dl > div { display: flex; align-items: center; height: 30px; padding-left: 12px; letter-spacing: -0.1px; }
.palette dt { width: 135px; white-space: nowrap; }
.palette dd { display: flex; margin: 0; }
.i16 { width: 16px; height: 16px; margin-left: 1px; }
.second { margin-left: 13px; }
.check { width: 14px; height: 14px; margin-left: 2px; }
.palette-foot { display: flex; justify-content: flex-end; align-items: flex-start; border-top: 1px solid #ccc; padding: 8px 11px 0 0; }
.palette-foot button { width: 82px; height: 20px; padding: 0; border: 1px solid #b5b5b5; background: #eaeaea; color: #666; font: 12px "Liberation Sans", Arial, sans-serif; }

.navbar { position: absolute; left: 842px; top: 812px; width: 237px; height: 24px; background: #f1f1f1; }
.navbar svg { width: 237px; height: 24px; }

.timeline { flex: none; height: 50px; display: flex; align-items: flex-start; background: #f1f1f1; border-top: 1px solid #d0d0d0; }
.playback { width: 144px; padding-top: 12px; }
.playback svg { width: 144px; height: 24px; }
.track { position: relative; width: 1746px; padding-top: 7px; }
.range { width: 1436px; height: 6px; background: #e391e6; }
.steps { display: flex; gap: 8px; padding: 2px 0 0 2px; }
.steps svg { width: 16px; height: 16px; }
.later { opacity: .3; }
.ticks { width: 1562px; height: 7px; margin: 3px 0 0 10px; border-bottom: 2px solid #ccc; background: repeating-linear-gradient(90deg, #ccc 0 2px, transparent 2px 24px); }
.playhead { position: absolute; left: 1576px; top: 9px; width: 12px; height: 32px; }
.settings { width: 16px; height: 16px; margin: 15px 0 0 1px; }
```
